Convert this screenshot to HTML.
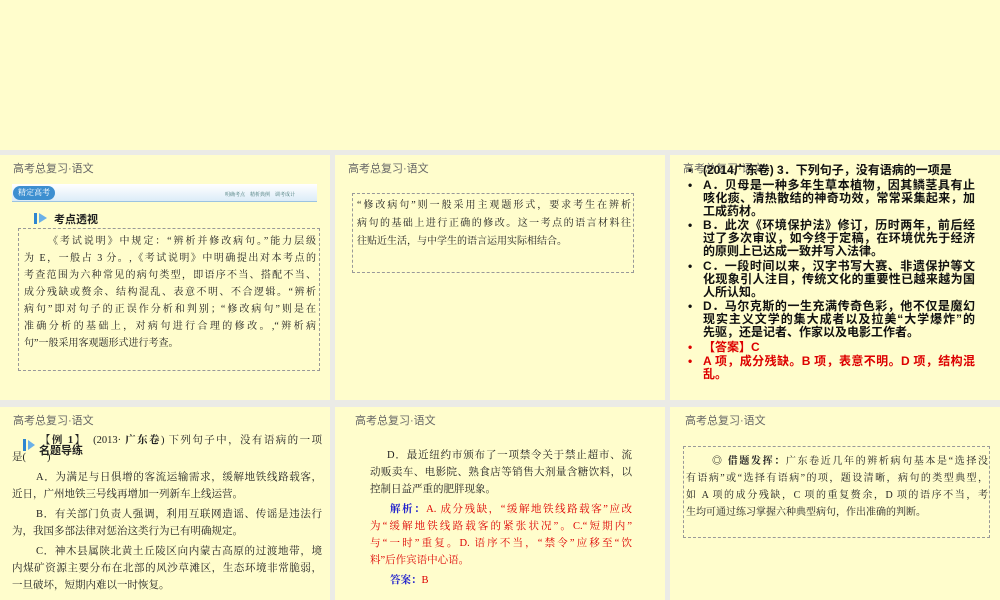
<!DOCTYPE html>
<html><head><meta charset="utf-8"><style>
*{margin:0;padding:0;box-sizing:border-box}
body{width:1000px;height:600px;background:#ebebe6;position:relative;overflow:hidden;font-family:"Liberation Serif","Noto Serif CJK SC",serif;color:#222}
.s{position:absolute;background:#fffdcc;overflow:hidden}
.h{position:absolute;left:13px;top:5px;font:11px "Liberation Sans","Noto Sans CJK SC",sans-serif;color:#666}
.a{position:absolute}
.box{position:absolute;border:1px dashed #999}
.L div{white-space:nowrap}
.L div.j{text-align:justify;text-align-last:justify;white-space:normal}
.t{font-size:10px;line-height:17px}
.b{font:bold 12px/13px "Liberation Sans","Noto Sans CJK SC",sans-serif;color:#111}
.L div.g{height:1.5px;line-height:0}
.p div.g{height:3px}
.bu{position:absolute;left:-15px}
.r{color:#d00}
.p{font-size:10.5px;line-height:17px}
</style></head><body>
<div class="s" style="left:0;top:0;width:1000px;height:150px"></div>

<div class="s" style="left:0;top:155px;width:330px;height:245px">
<div class="h">高考总复习·语文</div>
<div class="a" style="left:12px;top:29px;width:305px;height:18px;background:linear-gradient(#fff,#dcecf8);border-bottom:1px solid #9cc3e0"></div>
<div class="a" style="left:13px;top:31px;width:42px;height:14px;border-radius:7px;background:#3d8fd0;color:#fff;font-size:8px;line-height:14px;text-align:center">精定高考</div>
<div class="a" style="left:225px;top:36px;font-size:5px;color:#477">明确考点　精析典例　调考成计</div>
<div class="a" style="left:34px;top:58px;width:3px;height:11px;background:#2e86d0"></div>
<div class="a" style="left:39px;top:58px;width:0;height:0;border-left:8px solid #6ab0e8;border-top:5px solid transparent;border-bottom:5px solid transparent"></div>
<div class="a" style="left:54px;top:56px;font:bold 11px 'Liberation Sans','Noto Sans CJK SC',sans-serif">考点透视</div>
<div class="box" style="left:18px;top:73px;width:302px;height:143px"></div>
<div class="a t L" style="left:24px;top:78px;width:292px">
<div class="j" style="padding-left:24px">《考试说明》中规定：“辨析并修改病句。”能力层级</div>
<div class="j">为 E，一般占 3 分。,《考试说明》中明确提出对本考点的</div>
<div class="j">考查范围为六种常见的病句类型，即语序不当、搭配不当、</div>
<div class="j">成分残缺或赘余、结构混乱、表意不明、不合逻辑。“辨析</div>
<div class="j">病句”即对句子的正误作分析和判别；“修改病句”则是在</div>
<div class="j">准确分析的基础上，对病句进行合理的修改。,“辨析病</div>
<div>句”一般采用客观题形式进行考查。</div>
</div>
</div>

<div class="s" style="left:335px;top:155px;width:330px;height:245px">
<div class="h">高考总复习·语文</div>
<div class="box" style="left:17px;top:38px;width:282px;height:80px"></div>
<div class="a t L" style="left:22px;top:42px;width:274px;line-height:18px">
<div class="j">“修改病句”则一般采用主观题形式，要求考生在辨析</div>
<div class="j">病句的基础上进行正确的修改。这一考点的语言材料往</div>
<div>往贴近生活，与中学生的语言运用实际相结合。</div>
</div>
</div>

<div class="s" style="left:670px;top:155px;width:330px;height:245px">
<div class="h">高考总复习·语文</div>
<div class="a b L" style="left:33px;top:9px;width:272px">
<div><span class="bu">•</span>(2014广东卷) 3．下列句子，没有语病的一项是</div>
<div class="g"></div>
<div class="j"><span class="bu">•</span>A．贝母是一种多年生草本植物，因其鳞茎具有止</div>
<div class="j">咳化痰、清热散结的神奇功效，常常采集起来，加</div>
<div>工成药材。</div>
<div class="g"></div>
<div class="j"><span class="bu">•</span>B．此次《环境保护法》修订，历时两年，前后经</div>
<div class="j">过了多次审议，如今终于定稿，在环境优先于经济</div>
<div>的原则上已达成一致并写入法律。</div>
<div class="g"></div>
<div class="j"><span class="bu">•</span>C．一段时间以来，汉字书写大赛、非遗保护等文</div>
<div class="j">化现象引人注目，传统文化的重要性已越来越为国</div>
<div>人所认知。</div>
<div class="g"></div>
<div class="j"><span class="bu">•</span>D．马尔克斯的一生充满传奇色彩，他不仅是魔幻</div>
<div class="j">现实主义文学的集大成者以及拉美“大学爆炸”的</div>
<div>先驱，还是记者、作家以及电影工作者。</div>
<div class="g"></div>
<div class="r"><span class="bu">•</span>【答案】C</div>
<div class="g"></div>
<div class="r j"><span class="bu">•</span>A 项，成分残缺。B 项，表意不明。D 项，结构混</div>
<div class="r">乱。</div>
</div>
</div>

<div class="s" style="left:0;top:407px;width:330px;height:193px">
<div class="h">高考总复习·语文</div>
<div class="a" style="left:23px;top:32px;width:3px;height:12px;background:#2e86d0"></div>
<div class="a" style="left:28px;top:33px;width:0;height:0;border-left:7px solid #6ab0e8;border-top:5px solid transparent;border-bottom:5px solid transparent"></div>
<div class="a" style="left:39px;top:35px;font:bold 11px 'Liberation Sans','Noto Sans CJK SC',sans-serif">名题导练</div>
<div class="a p L" style="left:12px;top:25px;width:310px">
<div class="j" style="padding-left:28px"><b>【例 1】</b>　(2013· <b>广东卷</b>) 下列句子中，没有语病的一项</div>
<div>是(　　)</div>
<div class="g"></div>
<div class="j" style="padding-left:24px">A．为满足与日俱增的客流运输需求，缓解地铁线路载客，</div>
<div>近日，广州地铁三号线再增加一列新车上线运营。</div>
<div class="g"></div>
<div class="j" style="padding-left:24px">B．有关部门负责人强调，利用互联网造谣、传谣是违法行</div>
<div>为，我国多部法律对惩治这类行为已有明确规定。</div>
<div class="g"></div>
<div class="j" style="padding-left:24px">C．神木县属陕北黄土丘陵区向内蒙古高原的过渡地带，境</div>
<div class="j">内煤矿资源主要分布在北部的风沙草滩区，生态环境非常脆弱，</div>
<div>一旦破坏，短期内难以一时恢复。</div>
</div>
</div>

<div class="s" style="left:335px;top:407px;width:330px;height:193px">
<div class="h" style="left:20px">高考总复习·语文</div>
<div class="a p L" style="left:35px;top:40px;width:262px">
<div class="j" style="padding-left:17px">D．最近纽约市颁布了一项禁令关于禁止超市、流</div>
<div class="j">动贩卖车、电影院、熟食店等销售大剂量含糖饮料，以</div>
<div>控制日益严重的肥胖现象。</div>
<div class="g"></div>
<div class="j r" style="padding-left:20px"><b style="color:#22c">解析：</b>A. 成分残缺，“缓解地铁线路载客”应改</div>
<div class="j r">为“缓解地铁线路载客的紧张状况”。C.“短期内”</div>
<div class="j r">与“一时”重复。D. 语序不当，“禁令”应移至“饮</div>
<div class="r">料”后作宾语中心语。</div>
<div class="g"></div>
<div style="padding-left:20px"><b style="color:#22c">答案：</b><span class="r">B</span></div>
</div>
</div>

<div class="s" style="left:670px;top:407px;width:330px;height:193px">
<div class="h" style="left:15px">高考总复习·语文</div>
<div class="box" style="left:13px;top:39px;width:307px;height:92px"></div>
<div class="a t L" style="left:16px;top:46px;width:302px">
<div class="j" style="padding-left:26px"><b>◎ 借题发挥：</b>广东卷近几年的辨析病句基本是“选择没</div>
<div class="j">有语病”或“选择有语病”的项，题设清晰，病句的类型典型，</div>
<div class="j">如 A 项的成分残缺，C 项的重复赘余，D 项的语序不当，考</div>
<div>生均可通过练习掌握六种典型病句，作出准确的判断。</div>
</div>
</div>
</body></html>
